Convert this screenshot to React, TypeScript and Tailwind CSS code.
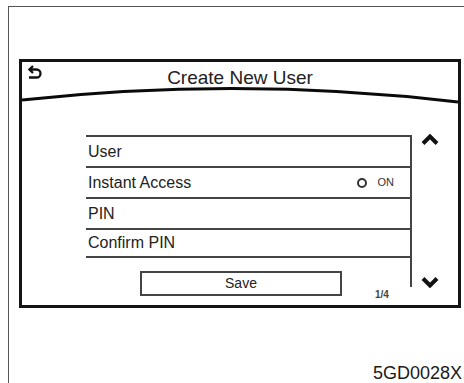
import React from "react";

const rows: { label: string; on?: boolean; h: string }[] = [
  { label: "User", h: "h-[31px]" },
  { label: "Instant Access", on: true, h: "h-[31px]" },
  { label: "PIN", h: "h-[31px]" },
  { label: "Confirm PIN", h: "h-[30px]" },
];

function BackIcon() {
  return (
    <svg width="14" height="15" viewBox="0 0 14 15" fill="none" stroke="#111" strokeWidth="2.3" strokeLinejoin="miter">
      <path d="M5 1 L1.5 4.5 L5 8" />
      <path d="M1.5 4.5 H8.5 A4 4 0 0 1 8.5 12.5 H1" />
    </svg>
  );
}

function Chevron({ up }: { up?: boolean }) {
  return (
    <svg width="18" height="11" viewBox="0 0 18 11" fill="none" stroke="#111" strokeWidth="4" strokeLinecap="butt" strokeLinejoin="miter">
      {up ? <path d="M2 9.5 L9 2.5 L16 9.5" /> : <path d="M2 1.5 L9 8.5 L16 1.5" />}
    </svg>
  );
}

export default function App() {
  return (
    <div className="w-[464px] h-[383px] bg-white overflow-hidden" style={{ fontFamily: '"Liberation Sans", Arial, sans-serif' }}>
      <div className="ml-[8px] mt-[6px] w-[456px] h-[377px] border-l border-t border-[#555]">
        <div className="ml-[10px] mt-[52px] w-[442px] h-[249px] border-[3px] border-[#141414]">
          <div className="relative h-[29px] flex items-center justify-center">
            <div className="absolute left-[6px] top-[3px]">
              <BackIcon />
            </div>
            <span className="text-[19px] leading-none text-[#222] mt-[1px]">Create New User</span>
          </div>
          <svg className="block mt-[-6px] overflow-visible" width="436" height="19" viewBox="0 0 436 19" fill="none">
            <path d="M0 15 Q218 -9 436 17" stroke="#0a0a0a" strokeWidth="3.2" />
          </svg>
          <div className="mt-[31px] flex">
            <div className="ml-[64px] w-[326px] h-[152px] border-r-2 border-[#444] flex flex-col">
              {rows.map((r, i) => (
                <div
                  key={r.label}
                  className={`${r.h} shrink-0 border-t-2 border-[#444] flex items-center pl-[2px] pr-[16px] text-[16px] text-[#222] ${i === rows.length - 1 ? "border-b-2" : ""}`}
                >
                  <span className="flex-1">{r.label}</span>
                  {r.on && (
                    <span className="flex items-center">
                      <span className="w-[10px] h-[10px] rounded-full border-2 border-[#333]" />
                      <span className="ml-[11px] text-[11px] text-[#333]">ON</span>
                    </span>
                  )}
                </div>
              ))}
              <div className="mt-[13px] shrink-0 flex items-end">
                <div className="ml-[54px] w-[202px] h-[25px] shrink-0 border-2 border-[#444] flex items-center justify-center text-[14px] text-[#222]">
                  Save
                </div>
                <span className="ml-[33px] mb-[-4px] text-[10px] leading-none font-bold text-[#444]">1/4</span>
              </div>
            </div>
            <div className="ml-[9px] h-[152px] flex flex-col justify-between">
              <div className="mt-[-1px]">
                <Chevron up />
              </div>
              <div className="mb-[-1px]">
                <Chevron />
              </div>
            </div>
          </div>
        </div>
        <div className="mt-[56px] flex justify-end pr-[2px] text-[18px] leading-[18px] text-[#1a1a1a]">5GD0028X</div>
      </div>
    </div>
  );
}
